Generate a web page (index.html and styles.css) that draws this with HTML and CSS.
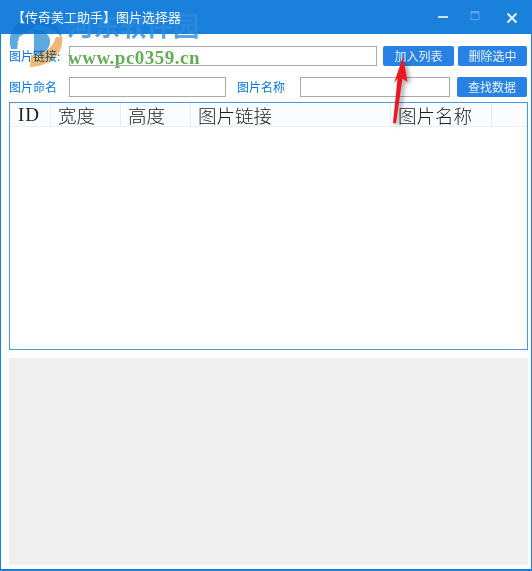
FILE: index.html
```html
<!DOCTYPE html>
<html lang="zh">
<head>
<meta charset="utf-8">
<title>图片选择器</title>
<link rel="stylesheet" href="styles.css">
</head>
<body>
<div class="window">
  <div class="wm-text">河东软件园</div>
  <div class="wm-url">www.pc0359.cn</div>
  <header class="titlebar">
    <span class="title">【传奇美工助手】图片选择器</span>
    <div class="controls">
      <svg class="ctl c-min" width="12" height="12" viewBox="0 0 12 12"><rect x="1" y="5" width="10" height="2" fill="#cfe4f8"/></svg>
      <svg class="ctl c-max" width="12" height="12" viewBox="0 0 12 12"><rect x="2" y="1.500" width="8" height="8" fill="none" stroke="#5aa2e6"/><rect x="2" y="1.500" width="8" height="2" fill="#5aa2e6"/></svg>
      <svg class="ctl c-close" width="12" height="12" viewBox="0 0 12 12"><path d="M1.500 1.500l9 9M10.500 1.500l-9 9" stroke="#e4f0fb" stroke-width="2"/></svg>
    </div>
  </header>
  <main class="content">
    <div class="row first">
      <label class="label">图片链接:</label>
      <input class="field wide" type="text">
      <button class="btn add">加入列表</button>
      <button class="btn">删除选中</button>
    </div>
    <div class="row second">
      <label class="label">图片命名</label>
      <input class="field name" type="text">
      <label class="label mid">图片名称</label>
      <input class="field search" type="text">
      <button class="btn">查找数据</button>
    </div>
    <section class="table">
      <div class="thead">
        <div class="th c-id">ID</div>
        <div class="th c-w">宽度</div>
        <div class="th c-h">高度</div>
        <div class="th c-url">图片链接</div>
        <div class="th c-name">图片名称</div>
        <div class="th c-rest"></div>
      </div>
    </section>
    <section class="preview"></section>
  </main>
  <svg class="wm-logo" width="60" height="56" viewBox="0 0 60 56">
    <path d="M4 36C-1 20 10 4 28 3 42 2 52 12 55 25 49 17 40 12 30 12L12 24 10 36Z" fill="#4b9fdc"/>
    <path d="M27 17C36 15 44 22 43 30 42 38 34 42 27 44Z" fill="#4b9fdc"/>
    <path d="M55 24C57 40 44 53 23 54L24 42C36 42 46 35 49 24Z" fill="#f3ad66"/>
    <path d="M10 29L23 20 25 38 13 38 13 33Z" fill="#fff"/>
  </svg>
  <svg class="arrow" width="30" height="76" viewBox="0 0 30 76">
    <path d="M20 7L24.500 32 19.500 28.500 13 73.500 10 73 14.500 28.500 11 33Z" fill="#ee1620"/>
  </svg>
</div>
</body>
</html>
```
FILE: styles.css
```css
* { box-sizing: border-box; }
html, body { margin: 0; padding: 0; }
body { width: 532px; height: 571px; overflow: hidden; background: #fff; font-family: "Noto Sans CJK SC", "Liberation Sans", sans-serif; }
.window { position: relative; width: 532px; height: 571px; border: solid #1a80dc; border-width: 0 1px 2px 1px; overflow: hidden; background: linear-gradient(#1a80dc 34px, #fff 34px); }
.titlebar { position: relative; z-index: 4; height: 34px; background: rgba(26, 128, 220, .75); display: flex; align-items: center; justify-content: space-between; color: #fff; padding-left: 11px; }
.title { font-size: 13px; line-height: 34px; color: #f2f8fe; }
.controls { display: flex; align-items: center; padding-right: 13px; }
.ctl { display: block; width: 12px; height: 12px; }
.c-min { margin-right: 20px; margin-top: -1px; }
.c-max { margin-right: 25px; margin-top: -3px; }
.c-close { margin-top: 1px; }
.content { position: relative; z-index: 2; padding: 12px 4px 0 8px; }
.row { display: flex; align-items: center; height: 20px; }
.second { margin-top: 11px; }
.label { font-size: 12px; color: #0a78e6; line-height: 20px; }
.first .label { width: 60px; }
.second > .label:first-child { width: 60px; }
.mid { width: 63px; margin-left: 11px; }
.field { height: 20px; border: 1px solid #ababab; background: transparent; padding: 0; outline: none; }
.wide { width: 308px; margin-right: 6px; }
.name { width: 157px; }
.search { width: 150px; margin-right: 7px; }
.btn { width: 69px; height: 20px; padding: 0; border: 0; border-radius: 2px; background: #2782e4; color: #e8f2fc; font: 12px/20px "Noto Sans CJK SC", sans-serif; }
.add { width: 71px; margin-right: 4px; }
.second .btn { width: 70px; }
.table { margin-top: 5px; width: 519px; height: 248px; border: 1px solid #4a97e0; background: #fff; }
.thead { display: flex; height: 24px; background: #fbfcfe; border-bottom: 1px solid #e8f0f8; }
.th { height: 23px; border-right: 1px solid #e3edf7; font-family: "Noto Sans CJK SC", sans-serif; font-weight: 300; font-size: 18.500px; line-height: 24px; color: #222; padding-left: 7px; white-space: nowrap; }
.c-id { width: 41px; font-family: "Liberation Serif", serif; font-weight: 400; font-size: 19px; letter-spacing: 1px; padding-left: 8px; }
.c-w, .c-h { width: 70px; }
.c-url { width: 200px; }
.c-name { width: 101px; }
.c-rest { flex: 1; border-right: 0; }
.preview { margin-top: 8px; width: 519px; height: 207px; background: #efefef; }
.wm-text { position: absolute; z-index: 1; left: 66px; top: 8px; font-family: "Noto Sans CJK SC", sans-serif; font-weight: 700; font-size: 26.500px; line-height: 34px; color: #5aa5e0; white-space: nowrap; }
.wm-url { position: absolute; z-index: 1; left: 67px; top: 46px; font-family: "Liberation Serif", serif; font-weight: 700; font-size: 19px; line-height: 24px; color: #65ad55; letter-spacing: .5px; white-space: nowrap; }
.wm-logo { position: absolute; z-index: 3; left: 6px; top: 13px; opacity: .9; mix-blend-mode: multiply; }
.arrow { position: absolute; z-index: 5; left: 382px; top: 50px; filter: drop-shadow(3px 2px 2px rgba(0, 0, 0, .35)); }
```
